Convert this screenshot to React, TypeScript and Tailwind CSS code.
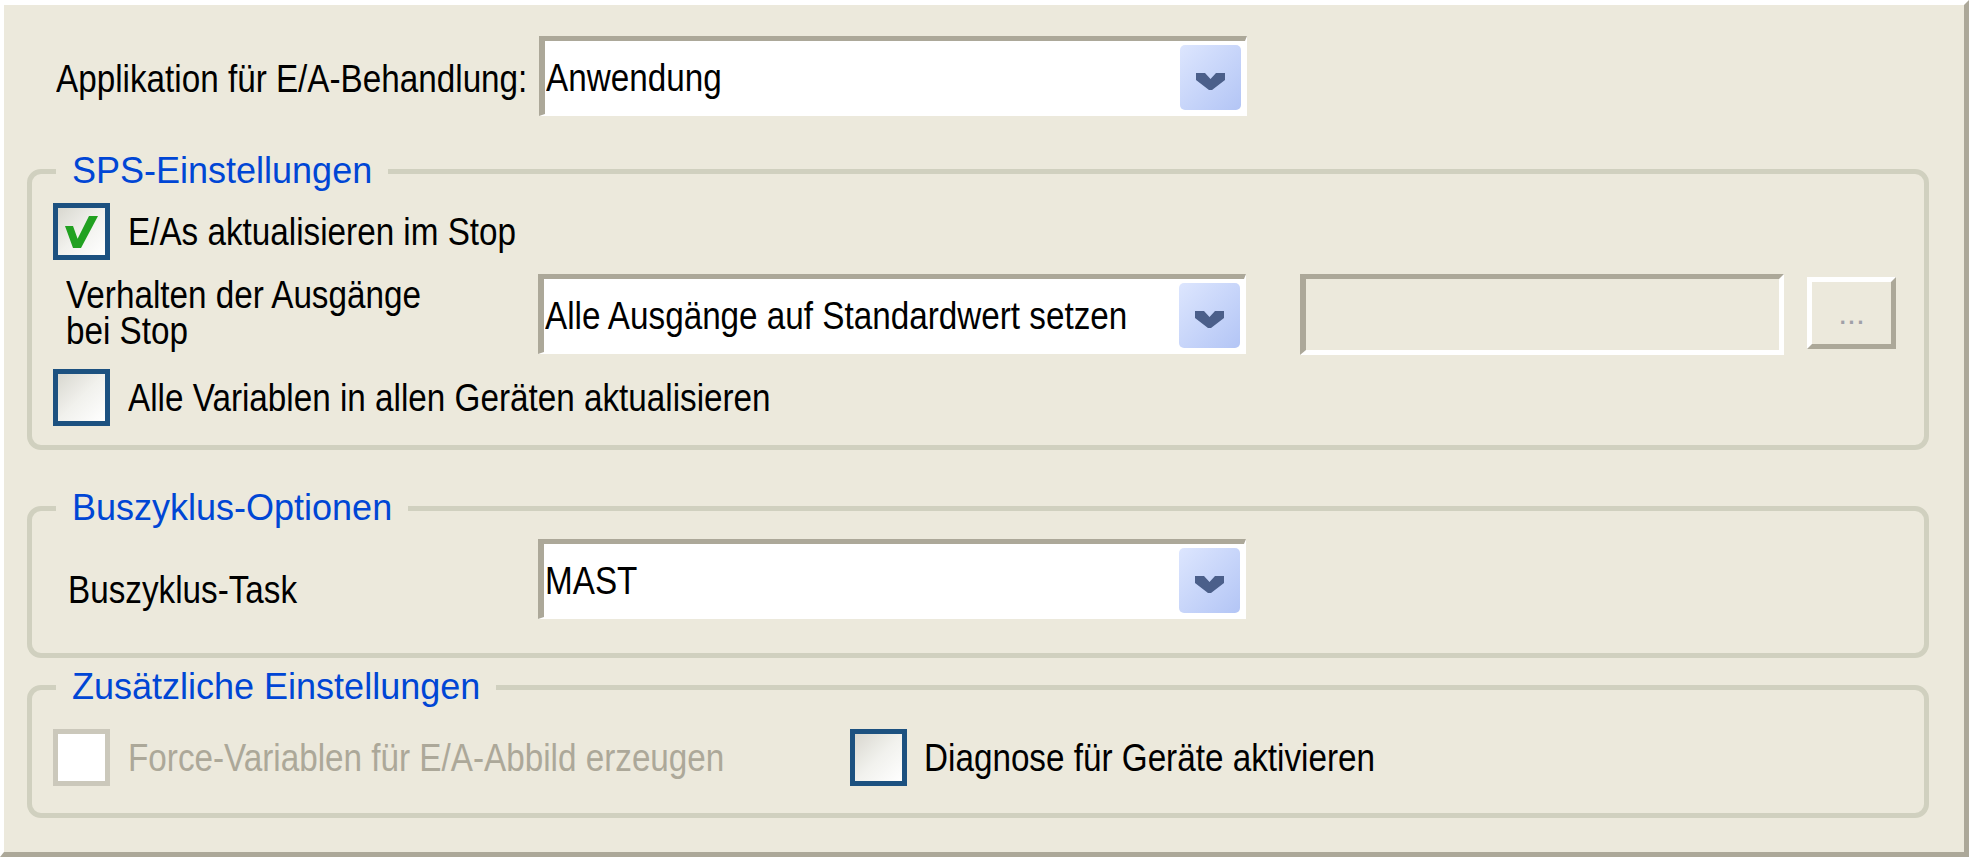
import React from "react";

const FONT = "font-['Liberation_Sans',Arial,sans-serif]";

function T({ children, className = "" }: { children: React.ReactNode; className?: string }) {
  return (
    <span className={"inline-block whitespace-nowrap origin-left scale-x-[0.875] " + className}>
      {children}
    </span>
  );
}

function Chevron() {
  return (
    <svg width="29" height="17" viewBox="0 0 29 17">
      <polygon points="0,0 9,0 14.5,6 20,0 29,0 29,7 16,17 13,17 0,7" fill="#4B5F8A" />
    </svg>
  );
}

function Dropdown({ value }: { value: string }) {
  return (
    <div className="flex h-[80px] w-[708px] shrink-0 items-center border-t-[5px] border-l-[6px] border-r-[2px] border-b-[2px] border-t-[#ACA899] border-l-[#ACA899] border-r-white border-b-white bg-white">
      <div className="min-w-0 flex-1 pl-[1px] text-[38px] leading-[38px] text-black">
        <T>{value}</T>
      </div>
      <div className="mr-[4px] flex h-[65px] w-[61px] shrink-0 items-center justify-center rounded-[5px] bg-linear-to-br from-[#DDE6FE] to-[#B3C5F5] pt-[8px]">
        <Chevron />
      </div>
    </div>
  );
}

function Checkbox({ checked = false, disabled = false }: { checked?: boolean; disabled?: boolean }) {
  if (disabled) {
    return <div className="h-[57px] w-[57px] shrink-0 border-[5px] border-[#CBC8BB] bg-white" />;
  }
  return (
    <div className="h-[57px] w-[57px] shrink-0 border-[5px] border-[#1C5180] bg-linear-to-br from-[#D9D8D0] via-[#F1F1ED] to-white">
      {checked && (
        <svg className="h-full w-full" viewBox="0 0 47 47">
          <polygon points="7,18 15,18 19.6,30.7 31,8 40,8 23,40 15,40" fill="#21A121" />
        </svg>
      )}
    </div>
  );
}

function Group({
  title,
  children,
  className = "",
}: {
  title: string;
  children: React.ReactNode;
  className?: string;
}) {
  return (
    <fieldset className={"w-full rounded-[14px] border-[5px] border-[#D0D0BF] " + className}>
      <legend className="ml-[24px] px-[16px] text-[36px] leading-[38px] text-[#0046D5]">{title}</legend>
      {children}
    </fieldset>
  );
}

export default function App() {
  return (
    <div className={"h-[858px] w-[1969px] bg-white " + FONT}>
      <div className="flex h-[857px] w-[1969px] flex-col border-t-[5px] border-l-[4px] border-r-[5px] border-b-[5px] border-t-white border-l-white border-r-[#ACA899] border-b-[#ACA899] bg-[#ECE9DC] pl-[23px] pr-[35px] text-black">
        {/* Row 1 */}
        <div className="mt-[31px] flex items-start">
          <div className="ml-[29px] mt-[24px] w-[483px] shrink-0 text-[38px] leading-[38px]">
            <T>Applikation für E/A-Behandlung:</T>
          </div>
          <Dropdown value="Anwendung" />
        </div>

        {/* SPS-Einstellungen */}
        <Group title="SPS-Einstellungen" className="mt-[36px]">
          <div className="flex flex-col pt-[13px] pb-[19px]">
            <div className="ml-[21px] flex items-center">
              <Checkbox checked />
              <div className="ml-[18px] text-[38px] leading-[38px]">
                <T>E/As aktualisieren im Stop</T>
              </div>
            </div>
            <div className="mt-[14px] flex items-start">
              <div className="ml-[34px] mt-[3px] w-[472px] shrink-0 text-[38px] leading-[36px]">
                <div>
                  <T>Verhalten der Ausgänge</T>
                </div>
                <div>
                  <T>bei Stop</T>
                </div>
              </div>
              <Dropdown value="Alle Ausgänge auf Standardwert setzen" />
              <div className="ml-[54px] h-[81px] w-[484px] shrink-0 border-t-[5px] border-l-[6px] border-r-[5px] border-b-[5px] border-t-[#ACA899] border-l-[#ACA899] border-r-white border-b-white bg-[#ECE9DC]" />
              <div className="ml-[23px] mt-[3px] flex h-[72px] w-[89px] shrink-0 items-center justify-center border-[5px] border-t-white border-l-white border-r-[#ACA899] border-b-[#ACA899] bg-[#ECE9DC] text-[32px] leading-[32px] text-[#A0A0A8]">
                ...
              </div>
            </div>
            <div className="ml-[21px] mt-[14px] flex items-center">
              <Checkbox />
              <div className="ml-[18px] text-[38px] leading-[38px]">
                <T>Alle Variablen in allen Geräten aktualisieren</T>
              </div>
            </div>
          </div>
        </Group>

        {/* Buszyklus-Optionen */}
        <Group title="Buszyklus-Optionen" className="mt-[39px]">
          <div className="flex items-start pt-[12px] pb-[34px]">
            <div className="ml-[36px] mt-[32px] w-[470px] shrink-0 text-[38px] leading-[38px]">
              <T>Buszyklus-Task</T>
            </div>
            <Dropdown value="MAST" />
          </div>
        </Group>

        {/* Zusätzliche Einstellungen */}
        <Group title="Zusätzliche Einstellungen" className="mt-[10px]">
          <div className="flex items-center pt-[23px] pb-[27px]">
            <div className="ml-[21px] flex w-[797px] shrink-0 items-center">
              <Checkbox disabled />
              <div className="ml-[18px] text-[38px] leading-[38px] text-[#ACA899]">
                <T>Force-Variablen für E/A-Abbild erzeugen</T>
              </div>
            </div>
            <div className="flex items-center">
              <Checkbox />
              <div className="ml-[17px] text-[38px] leading-[38px]">
                <T>Diagnose für Geräte aktivieren</T>
              </div>
            </div>
          </div>
        </Group>
      </div>
    </div>
  );
}
